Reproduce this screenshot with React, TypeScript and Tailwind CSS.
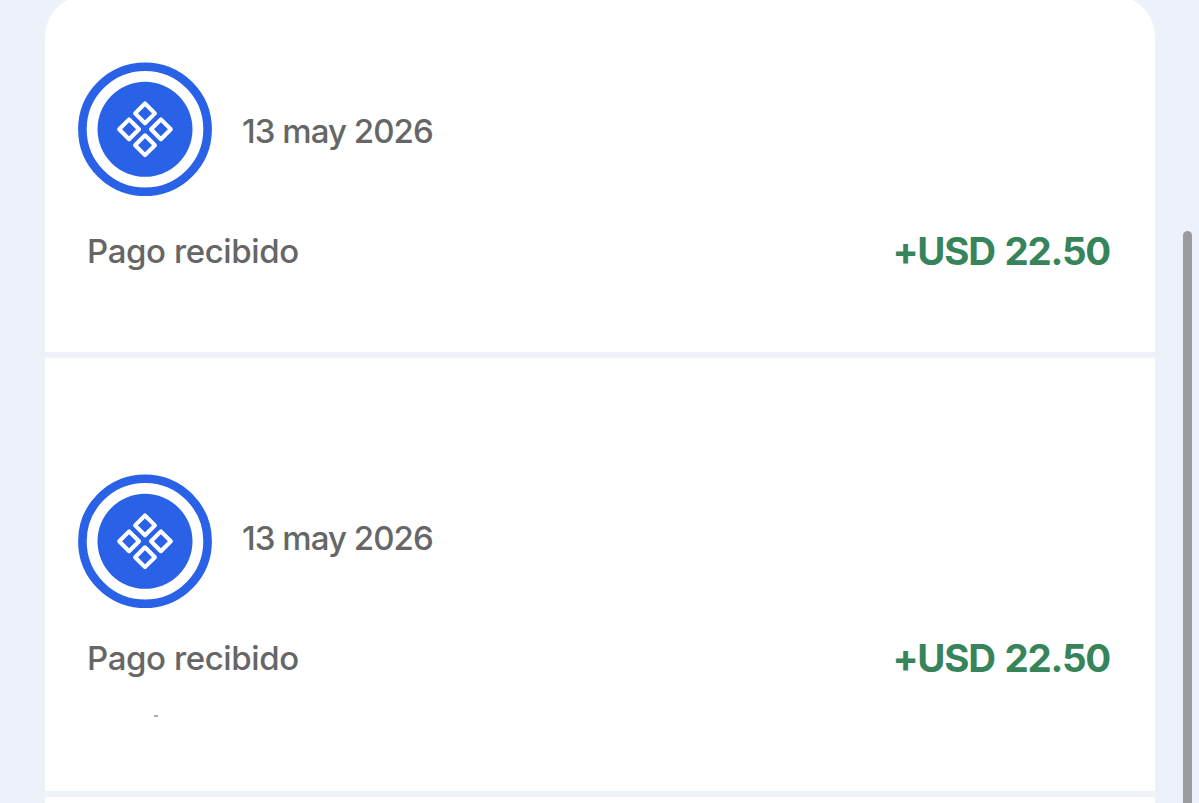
import type { ReactNode } from "react";

function Badge() {
  return (
    <svg viewBox="0 0 134 134" className="size-[134px] shrink-0" aria-hidden="true">
      <circle cx="67" cy="67.3" r="62.6" fill="#fff" stroke="#2962e6" strokeWidth="8.6" />
      <circle cx="67" cy="67.3" r="47.5" fill="#2962e6" />
      <g fill="none" stroke="#fff" strokeWidth="4.1" strokeLinejoin="round" transform="translate(0 .3)">
        <path d="M67 41.2 76.9 51.1 67 61 57.1 51.1Z" />
        <path d="M67 73 76.9 82.9 67 92.8 57.1 82.9Z" />
        <path d="M51.1 57.1 61 67 51.1 76.9 41.2 67Z" />
        <path d="M82.9 57.1 92.8 67 82.9 76.9 73 67Z" />
      </g>
    </svg>
  );
}

interface PaymentProps {
  className: string;
  dateClass: string;
  rowClass: string;
  children?: ReactNode;
}

function Payment({ className, dateClass, rowClass, children }: PaymentProps) {
  return (
    <section className={`bg-white pl-[33px] pr-[45px] ${className}`}>
      <div className="flex h-[134px] items-start">
        <Badge />
        <span className={`ml-[30px] whitespace-nowrap text-[33px] font-[450] leading-[50px] tracking-[-0.95px] text-[#666] ${dateClass}`}>
          13 may 2026
        </span>
      </div>
      <div className={`flex justify-between pl-[9px] ${rowClass}`}>
        <span className="whitespace-nowrap text-[33px] font-[450] leading-[50px] tracking-[-0.4px] text-[#666]">Pago recibido</span>
        <span className="whitespace-nowrap text-[38.5px] font-bold leading-[50px] tracking-[-1.25px] [word-spacing:2px] text-[#38845a]">+USD 22.50</span>
      </div>
      {children}
    </section>
  );
}

export default function App() {
  return (
    <main className="flex h-[803px] w-[1199px] overflow-hidden bg-[#edf1fa] pl-[45px] font-[Inter,sans-serif]">
      <div className="-mt-1 w-[1110px] shrink-0">
        <Payment className="h-[356px] rounded-t-[40px] pt-[66px]" dateClass="mt-11" rowClass="mt-[30px]" />
        <div className="h-[6px] bg-[#f0f2fa]" />
        <Payment className="h-[433px] pt-[116px]" dateClass="mt-[39px]" rowClass="mt-[25px]">
          <div className="ml-[76px] mt-[32px] h-[2px] w-1 bg-[#aaa]" />
        </Payment>
        <div className="h-[6px] bg-[#f0f2fa]" />
        <div className="h-[10px] bg-white" />
      </div>
      <div className="ml-7 mt-[231px] h-[600px] w-[9px] shrink-0 rounded-full bg-[#999b9f]" />
    </main>
  );
}
